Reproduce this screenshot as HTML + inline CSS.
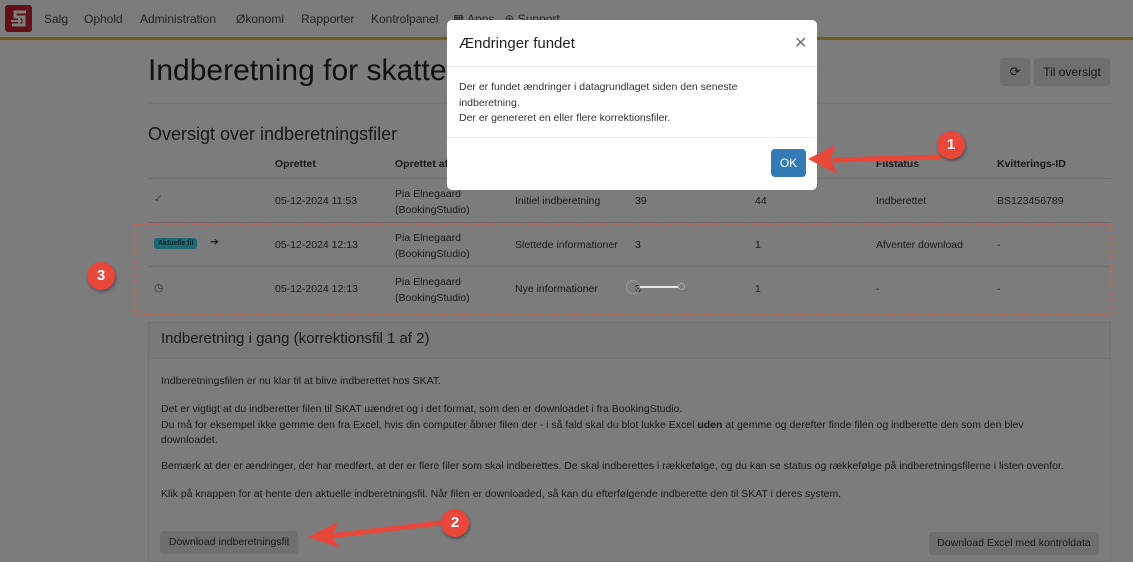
<!DOCTYPE html>
<html><head><meta charset="utf-8"><meta name="color-scheme" content="only light"><style>
*{box-sizing:border-box;margin:0;padding:0}
html,body{background:#f8f8f8}
body{width:1133px;height:562px;overflow:hidden;font-family:"Liberation Sans",sans-serif;color:#333;position:relative}
.a{position:absolute;white-space:nowrap}
.nav{font-size:12px;color:#444;top:12px}
.s{font-size:10.5px}
.th{font-size:10.5px;font-weight:bold;top:158px}
.btn{position:absolute;background:#dedede;border-radius:3px;font-size:11px;color:#333;text-align:center}
.circ{position:absolute;width:28px;height:28px;border-radius:50%;background:#e8473a;color:#fff;font-weight:bold;font-size:15px;text-align:center;line-height:28px;box-shadow:1px 2px 3px rgba(0,0,0,.35)}
.hl{position:absolute;height:1px;background:#dcdcdc;left:148px;width:963px}
</style></head><body>
<svg class="a" style="left:0;top:0" width="1133" height="562"><rect width="1133" height="562" fill="#f8f8f8"/></svg>
<div class="a" style="left:0;top:37px;width:1133px;height:3px;background:#e0b840"></div>
<div class="a" style="left:5px;top:5px;width:27px;height:27px;background:#c0202c;border-radius:3px"></div>
<svg class="a" style="left:8px;top:8px" width="21" height="21" viewBox="0 0 21 21"><path d="M18 4H7v5h9v8H4" fill="none" stroke="#fff" stroke-width="3"/><path d="M3 12h7v-3l4 4-4 4v-3H3z" fill="#fff"/></svg>
<div class="a nav" style="left:44px">Salg</div>
<div class="a nav" style="left:84px">Ophold</div>
<div class="a nav" style="left:140px">Administration</div>
<div class="a nav" style="left:236px">Økonomi</div>
<div class="a nav" style="left:301px">Rapporter</div>
<div class="a nav" style="left:371px">Kontrolpanel</div>
<div class="a nav" style="left:453px">▦ Apps &nbsp; ⊛ Support</div>

<div class="a" style="left:148px;top:54px;font-size:30px;color:#222">Indberetning for skatteår 2024</div>
<div class="btn" style="left:1000px;top:58px;width:30px;height:28px;line-height:28px;font-size:13px">⟳</div>
<div class="btn" style="left:1034px;top:58px;width:76px;height:28px;line-height:28px;font-size:12px">Til oversigt</div>
<div class="hl" style="top:103px;background:#e8e8e8"></div>
<div class="a" style="left:148px;top:124px;font-size:18px">Oversigt over indberetningsfiler</div>
<div class="a th" style="left:275px">Oprettet</div>
<div class="a th" style="left:395px">Oprettet af</div>
<div class="a th" style="left:876px">Filstatus</div>
<div class="a th" style="left:997px">Kvitterings-ID</div>
<div class="hl" style="top:178px"></div>
<div class="hl" style="top:222px"></div>
<div class="hl" style="top:266px"></div>

<div class="a s" style="left:154px;top:193px;color:#3a9a50">✓</div>
<div class="a s" style="left:275px;top:195px">05-12-2024 11:53</div>
<div class="a s" style="left:395px;top:186px;line-height:16px">Pia Elnegaard<br>(BookingStudio)</div>
<div class="a s" style="left:515px;top:195px">Initiel indberetning</div>
<div class="a s" style="left:635px;top:195px">39</div>
<div class="a s" style="left:755px;top:195px">44</div>
<div class="a s" style="left:876px;top:195px">Indberettet</div>
<div class="a s" style="left:997px;top:195px">BS123456789</div>

<div class="a" style="left:154px;top:238px;background:#3cd0e8;border-radius:3px;font-size:7px;font-weight:bold;padding:2px 4px;color:#185460">Aktuelle fil</div>
<div class="a s" style="left:210px;top:236px">➔</div>
<div class="a s" style="left:275px;top:239px">05-12-2024 12:13</div>
<div class="a s" style="left:395px;top:230px;line-height:16px">Pia Elnegaard<br>(BookingStudio)</div>
<div class="a s" style="left:515px;top:239px">Slettede informationer</div>
<div class="a s" style="left:635px;top:239px">3</div>
<div class="a s" style="left:755px;top:239px">1</div>
<div class="a s" style="left:876px;top:239px">Afventer download</div>
<div class="a s" style="left:997px;top:239px">-</div>

<div class="a s" style="left:154px;top:282px;color:#666">◷</div>
<div class="a s" style="left:275px;top:283px">05-12-2024 12:13</div>
<div class="a s" style="left:395px;top:274px;line-height:16px">Pia Elnegaard<br>(BookingStudio)</div>
<div class="a s" style="left:515px;top:283px">Nye informationer</div>
<div class="a s" style="left:635px;top:283px">3</div>
<div class="a s" style="left:755px;top:283px">1</div>
<div class="a s" style="left:876px;top:283px">-</div>
<div class="a s" style="left:997px;top:283px">-</div>

<div class="a" style="left:148px;top:322px;width:963px;height:240px;border:1px solid #e4e4e4"></div>
<div class="a" style="left:149px;top:323px;width:961px;height:36px;background:#f2f2f2;border-bottom:1px solid #e4e4e4"></div>
<div class="a" style="left:161px;top:330px;font-size:15px">Indberetning i gang (korrektionsfil 1 af 2)</div>
<div class="a s" style="left:161px;top:375px">Indberetningsfilen er nu klar til at blive indberettet hos SKAT.</div>
<div class="a s" style="left:161px;top:402px;line-height:15.5px">Det er vigtigt at du indberetter filen til SKAT uændret og i det format, som den er downloadet i fra BookingStudio.<br>Du må for eksempel ikke gemme den fra Excel, hvis din computer åbner filen der - i så fald skal du blot lukke Excel <b>uden</b> at gemme og derefter finde filen og indberette den som den blev<br>downloadet.</div>
<div class="a s" style="left:161px;top:460px">Bemærk at der er ændringer, der har medført, at der er flere filer som skal indberettes. De skal indberettes i rækkefølge, og du kan se status og rækkefølge på indberetningsfilerne i listen ovenfor.</div>
<div class="a s" style="left:161px;top:488px">Klik på knappen for at hente den aktuelle indberetningsfil. Når filen er downloaded, så kan du efterfølgende indberette den til SKAT i deres system.</div>
<div class="btn" style="left:160px;top:531px;width:138px;height:23px;line-height:23px;font-size:10.5px">Download indberetningsfil</div>
<div class="btn" style="left:929px;top:532px;width:170px;height:23px;line-height:23px;font-size:10.5px">Download Excel med kontroldata</div>

<!-- backdrop -->
<div class="a" style="left:0;top:0;width:1133px;height:562px;background:rgba(0,0,0,0.5)"></div>

<div class="a" style="left:626px;top:280px;width:14px;height:14px;border:1px solid #999;border-radius:50%"></div>
<div class="a" style="left:640px;top:286px;width:38px;height:2px;background:#e8e8e8"></div>
<div class="a" style="left:678px;top:283px;width:7px;height:7px;border:1px solid #aaa;border-radius:50%"></div>
<svg class="a" style="left:134px;top:223px" width="978" height="92"><rect x="1" y="1" width="976" height="90" fill="none" stroke="#e0584c" stroke-width="1.2" stroke-dasharray="4 3"/></svg>
<div class="circ" style="left:87px;top:262px">3</div>

<svg class="a" style="left:300px;top:510px" width="145" height="40"><path d="M140 13 L30 26" stroke="#e8473a" stroke-width="5" stroke-linecap="round"/><path d="M8 27 L38 12 L32 27 L40 38 Z" fill="#e8473a"/></svg>
<div class="circ" style="left:441px;top:509px">2</div>

<div class="a" style="left:447px;top:20px;width:370px;height:170px;background:#fff;border-radius:5px"></div>
<div class="a" style="left:459px;top:35px;font-size:15px;color:#222">Ændringer fundet</div>
<div class="a" style="left:794px;top:33px;font-size:16px;color:#777">✕</div>
<div class="a" style="left:447px;top:66px;width:370px;height:1px;background:#e5e5e5"></div>
<div class="a" style="left:459px;top:80px;font-size:10.5px;line-height:15.5px;color:#333">Der er fundet ændringer i datagrundlaget siden den seneste<br>indberetning.<br>Der er genereret en eller flere korrektionsfiler.</div>
<div class="a" style="left:447px;top:137px;width:370px;height:1px;background:#eee"></div>
<div class="a" style="left:771px;top:149px;width:35px;height:28px;background:#337ab7;border-radius:4px;color:#fff;font-size:12px;text-align:center;line-height:28px">OK</div>
<svg class="a" style="left:805px;top:140px" width="140" height="40"><path d="M135 17 L30 20" stroke="#e8473a" stroke-width="5" stroke-linecap="round"/><path d="M3 19 L30 5 L26 19 L32 34 Z" fill="#e8473a"/></svg>
<div class="circ" style="left:937px;top:131px">1</div>
</body></html>
